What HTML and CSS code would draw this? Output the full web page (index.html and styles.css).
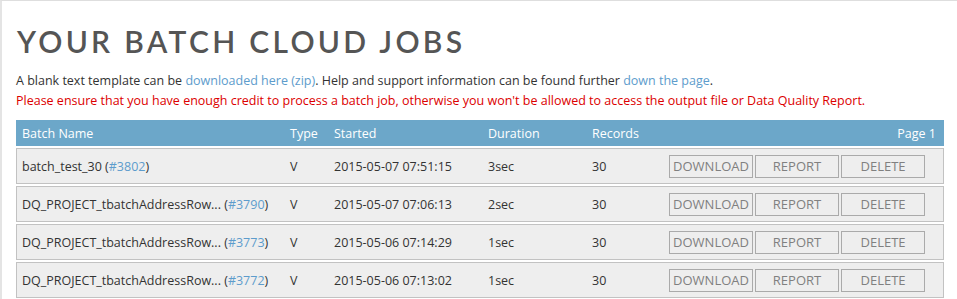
FILE: index.html
```html
<!DOCTYPE html>
<html>
<head>
    <title>Your Batch Cloud Jobs</title>
    <link rel="stylesheet" href="styles.css">
</head>
<body>
    <div class="page">
        <h1>Your Batch Cloud Jobs</h1>
        <p class="info">A blank text template can be <a href="#">downloaded here (zip)</a>. Help and support information can be found further <a href="#">down the page</a>.</p>
        <p class="warn">Please ensure that you have enough credit to process a batch job, otherwise you won't be allowed to access the output file or Data Quality Report.</p>

        <div class="jobs">
            <div class="jobs-head">
                <span>Batch Name</span>
                <span>Type</span>
                <span>Started</span>
                <span>Duration</span>
                <span>Records</span>
                <span class="page-no">Page 1</span>
            </div>
            <div class="job">
                <span>batch_test_30 (<a href="#">#3802</a>)</span>
                <span>V</span>
                <span>2015-05-07 07:51:15</span>
                <span>3sec</span>
                <span>30</span>
                <span class="actions"><button>Download</button><button>Report</button><button>Delete</button></span>
            </div>
            <div class="job">
                <span>DQ_PROJECT_tbatchAddressRow... (<a href="#">#3790</a>)</span>
                <span>V</span>
                <span>2015-05-07 07:06:13</span>
                <span>2sec</span>
                <span>30</span>
                <span class="actions"><button>Download</button><button>Report</button><button>Delete</button></span>
            </div>
            <div class="job">
                <span>DQ_PROJECT_tbatchAddressRow... (<a href="#">#3773</a>)</span>
                <span>V</span>
                <span>2015-05-06 07:14:29</span>
                <span>1sec</span>
                <span>30</span>
                <span class="actions"><button>Download</button><button>Report</button><button>Delete</button></span>
            </div>
            <div class="job">
                <span>DQ_PROJECT_tbatchAddressRow... (<a href="#">#3772</a>)</span>
                <span>V</span>
                <span>2015-05-06 07:13:02</span>
                <span>1sec</span>
                <span>30</span>
                <span class="actions"><button>Download</button><button>Report</button><button>Delete</button></span>
            </div>
        </div>
    </div>
</body>
</html>
```

FILE: styles.css
```css
body { margin: 0; font-family: "Open Sans", "DejaVu Sans", sans-serif; font-size: 12.5px; color: #333; }
.page { border-top: 1px solid #dedede; border-left: 2px solid #e4e4e4; padding: 20px 13px 0 14px; height: 300px; box-sizing: border-box; }
h1 { font-family: Lato, "Open Sans", sans-serif; font-weight: 600; font-size: 30px; letter-spacing: 3.3px; text-transform: uppercase; color: #555; margin: 0 0 10px 1px; line-height: 40px; }
p { margin: 0; line-height: 20px; }
a { color: #5d9ccc; text-decoration: none; }
.warn { color: #dc0000; }
.jobs { margin-top: 9px; width: 928px; }
.jobs-head, .job { display: grid; grid-template-columns: 268px 44px 154px 104px 76px 1fr; align-items: center; }
.jobs-head { background: #6ca7c9; color: #fff; height: 26px; padding: 0 8px 0 6px; }
.page-no { text-align: right; }
.job { background: #eee; border: 1px solid #c2c2c2; height: 34px; margin-top: 2px; padding: 0 18px 0 5px; }
.actions { display: flex; gap: 2px; justify-content: flex-end; }
button { width: 84px; height: 23px; background: #eee; border: 1px solid #aaa; color: #808080; font-family: "Open Sans", "DejaVu Sans", sans-serif; font-size: 13px; text-transform: uppercase; padding: 0; }
```
